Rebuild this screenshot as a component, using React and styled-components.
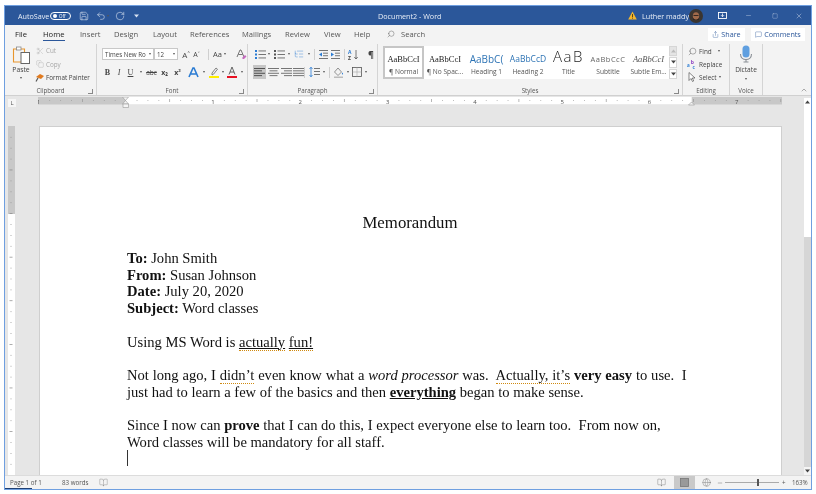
import React from 'react';
import styled, { createGlobalStyle } from 'styled-components';
import {
  Save, Undo2, RotateCw, Scissors, Copy, ListTree, Search, MessageSquare,
  Minus, Square, X, ChevronUp, BookOpen, Globe, Share,
} from 'lucide-react';

const GlobalStyle = createGlobalStyle`
  html, body { margin: 0; padding: 0; background: #fff; }
  body { width: 816px; height: 494px; overflow: hidden; font-family: "Open Sans", "Noto Sans", sans-serif; }
`;

const Wrap = styled.div`
  padding: 5px 4px 0 4px;
  filter: blur(0.3px);
`;

const Window = styled.div`
  width: 808px;
  height: 485px;
  box-sizing: border-box;
  border: 1px solid #6f9fe0;
  display: flex;
  flex-direction: column;
  background: #e6e6e6;
  overflow: hidden;
`;

const TitleBar = styled.div`
  height: 19px;
  flex: none;
  background: #2b579a;
  color: #fff;
  display: flex;
  align-items: center;
  font-size: 7.2px;
  padding-left: 13px;
`;

const AutoSave = styled.span`
  width: 32px;
  color: #e8eef7;
`;

const Toggle = styled.span`
  width: 21px;
  height: 8px;
  box-sizing: border-box;
  border: 1px solid #fff;
  border-radius: 5px;
  display: flex;
  align-items: center;
  gap: 2px;
  padding-left: 2px;
  font-size: 4.5px;
  margin-right: 8px;
  &::before { content: ''; width: 4px; height: 4px; border-radius: 50%; background: #fff; }
`;

const QuickIcon = styled.span`
  display: flex;
  align-items: center;
  width: ${p => p.$w}px;
  color: #e8eef7;
`;

const DocTitle = styled.span`
  position: absolute;
  left: 378px;
  color: #e8eef7;
`;

const TitleRight = styled.div`
  margin-left: auto;
  display: flex;
  align-items: center;
  padding-right: 8px;
`;

const UserName = styled.span`
  width: 47px;
  color: #e8eef7;
`;

const Tabs = styled.div`
  height: 18px;
  flex: none;
  background: #f3f3f3;
  display: flex;
  align-items: center;
  padding-left: 10px;
  font-size: 7.6px;
  color: #555;
  position: relative;
`;

const Tab = styled.span`
  width: ${p => p.$w}px;
  color: ${p => (p.$dark ? '#222' : '#555')};
  height: 18px;
  display: flex;
  align-items: center;
  position: relative;
  ${p => p.$active && `
    color: #222;
    &::after { content: ''; position: absolute; left: 0; bottom: 2px; width: 22px; height: 1.5px; background: #2b579a; }
  `}
`;

const TabActions = styled.div`
  margin-left: auto;
  display: flex;
  gap: 6px;
  padding-right: 6px;
`;

const TabButton = styled.span`
  background: #fff;
  color: #2b579a;
  height: 13px;
  width: ${p => p.$w}px;
  font-size: 7.2px;
  display: flex;
  align-items: center;
  justify-content: center;
  gap: 2px;
`;

const Ribbon = styled.div`
  height: 53px;
  flex: none;
  background: #f3f3f3;
  border-bottom: 1px solid #d0d0d0;
  box-sizing: border-box;
  display: flex;
  font-size: 6.6px;
  color: #444;
`;

const Group = styled.div`
  width: ${p => p.$w}px;
  flex: none;
  box-sizing: border-box;
  border-right: 1px solid #d4d4d4;
  margin-top: 1px;
  display: flex;
  flex-direction: column;
`;

const GroupBody = styled.div`
  flex: 1;
  display: flex;
  min-height: 0;
`;

const GroupLabel = styled.div`
  height: 9px;
  line-height: 9px;
  text-align: center;
  font-size: 6.2px;
  color: #555;
  position: relative;
`;

const Launcher = styled.span`
  position: absolute;
  right: 3px;
  top: 3px;
  width: 4px;
  height: 4px;
  border-right: 1px solid #888;
  border-bottom: 1px solid #888;
`;

const PasteCol = styled.div`
  width: 28px;
  margin-left: 2px;
  display: flex;
  flex-direction: column;
  align-items: center;
  font-size: 6.8px;
  padding-top: 2px;
  line-height: 10px;
`;

const PasteLabel = styled.span`
  margin-top: 1px;
`;

const Caret = styled.span`
  display: inline-block;
  width: 0;
  height: 0;
  border-left: 1.5px solid transparent;
  border-right: 1.5px solid transparent;
  border-top: 2px solid #555;
  margin: ${p => p.$m || '0 0 0 2px'};
  vertical-align: middle;
`;

const ClipCol = styled.div`
  display: flex;
  flex-direction: column;
  gap: 2.5px;
  padding-top: 1px;
`;

const ClipItem = styled.div`
  height: 11px;
  display: flex;
  align-items: center;
  gap: 1px;
  color: ${p => (p.$off ? '#a8a8a8' : '#444')};
  font-size: 6.3px;
`;

const ClipIcon = styled.span`
  width: 10px;
  display: flex;
  justify-content: center;
`;

const RowStack = styled.div`
  display: flex;
  flex-direction: column;
  gap: 4px;
  padding: 3px 0 0 5px;
`;

const Row = styled.div`
  height: 14px;
  display: flex;
  align-items: center;
`;

const Select = styled.span`
  width: ${p => p.$w}px;
  height: 12px;
  box-sizing: border-box;
  background: #fff;
  border: 1px solid #c8c8c8;
  font-size: 6.2px;
  padding: 0 2px;
  display: flex;
  align-items: center;
  justify-content: space-between;
  white-space: nowrap;
  overflow: hidden;
`;

const Slot = styled.span`
  width: ${p => p.$w}px;
  height: 14px;
  flex: none;
  display: flex;
  align-items: center;
  justify-content: center;
  font-size: ${p => p.$size || 7}px;
  color: ${p => p.$color || '#444'};
  font-weight: ${p => (p.$bold ? 700 : 400)};
  font-style: ${p => (p.$italic ? 'italic' : 'normal')};
  text-decoration: ${p => p.$deco || 'none'};
  font-family: ${p => (p.$serif ? '"Liberation Serif", serif' : 'inherit')};
  background: ${p => (p.$active ? '#c6c6c6' : 'transparent')};
`;

const Divider = styled.span`
  width: 1px;
  height: 11px;
  background: #cfcfcf;
  margin: 0 ${p => p.$m ?? 3}px;
  flex: none;
`;

const Gallery = styled.div`
  margin: 2px 0 0 5px;
  height: 33px;
  display: flex;
`;

const StyleList = styled.div`
  background: #fff;
  width: 286px;
  display: flex;
`;

const StyleItem = styled.div`
  width: ${p => p.$w}px;
  flex: none;
  box-sizing: border-box;
  border: ${p => (p.$tall ? 0 : 2)}px solid ${p => (p.$active ? '#c6c6c6' : 'transparent')};
  display: flex;
  flex-direction: column;
  align-items: center;
  padding-top: ${p => (p.$tall ? 0 : 3)}px;
`;

const StylePreview = styled.div`
  height: ${p => p.$h || 16}px;
  line-height: ${p => p.$h || 16}px;
  white-space: nowrap;
  font-family: ${p => (p.$serif ? '"Liberation Serif", serif' : '"Open Sans", sans-serif')};
  font-size: ${p => p.$size}px;
  font-weight: ${p => p.$weight || 400};
  color: ${p => p.$color || '#222'};
  font-style: ${p => (p.$italic ? 'italic' : 'normal')};
  letter-spacing: ${p => p.$ls || 0}px;
`;

const StyleName = styled.div`
  font-size: 6.6px;
  line-height: 9px;
  color: #555;
  white-space: nowrap;
`;

const GalleryScroll = styled.div`
  width: 8px;
  display: flex;
  flex-direction: column;
  gap: 1px;
`;

const ScrollCell = styled.span`
  flex: 1;
  background: ${p => (p.$off ? '#e4e4e4' : '#fff')};
  border: 1px solid #d6d6d6;
  display: flex;
  align-items: center;
  justify-content: center;
`;

const EditCol = styled.div`
  display: flex;
  flex-direction: column;
  gap: 1px;
  padding: 1px 0 0 4px;
  font-size: 6.4px;
`;

const EditItem = styled.div`
  height: 12px;
  display: flex;
  align-items: center;
  gap: 2px;
`;

const EditIcon = styled.span`
  width: 10px;
  display: flex;
  justify-content: center;
`;

const VoiceCol = styled.div`
  width: 100%;
  display: flex;
  flex-direction: column;
  align-items: center;
  font-size: 6.6px;
  line-height: 10px;
`;

const MicBody = styled.span`
  height: 18px;
  margin-top: 1px;
  margin-bottom: 2px;
  display: flex;
`;

const RibbonEnd = styled.div`
  flex: 1;
  display: flex;
  align-items: flex-end;
  justify-content: flex-end;
  padding: 0 3px 1px 0;
`;

const Workspace = styled.div`
  flex: 1;
  min-height: 0;
  display: flex;
`;

const Main = styled.div`
  flex: 1;
  min-width: 0;
  display: flex;
  flex-direction: column;
`;

const RulerRow = styled.div`
  height: 29px;
  flex: none;
  padding: 1px 0 0 3px;
  display: flex;
`;

const TabStop = styled.span`
  width: 8px;
  height: 8px;
  background: #f6f6f6;
  margin: 2px 22px 0 0;
  display: flex;
  align-items: flex-end;
  justify-content: center;
  font-size: 6px;
  line-height: 7px;
  color: #555;
`;

const DocRow = styled.div`
  flex: 1;
  min-height: 0;
  display: flex;
  overflow: hidden;
`;

const VRulerCol = styled.div`
  width: 34px;
  flex: none;
  padding-left: 3px;
  box-sizing: border-box;
`;

const Page = styled.div`
  width: 743px;
  flex: none;
  height: 600px;
  box-sizing: border-box;
  background: #fff;
  border-top: 1px solid #cfcfcf;
  border-left: 1px solid #cfcfcf;
  border-right: 1px solid #cfcfcf;
  padding: 86px 88px 0 87px;
  font-family: "Liberation Serif", "Times New Roman", serif;
  font-size: 14.58px;
  line-height: 16.7px;
  color: #111;
  white-space: pre-wrap;
`;

const MemoTitle = styled.div`
  text-align: center;
  font-size: 16.8px;
  line-height: 20px;
  margin-bottom: 17px;
`;

const Para = styled.div`
  margin-bottom: 16.7px;
`;

const WideLine = styled.span`
  word-spacing: 0.2px;
`;

const Squiggle = styled.span`
  border-bottom: 1px dotted #d08a10;
  text-decoration: ${p => (p.$under ? 'underline' : 'none')};
`;

const Under = styled.b`
  text-decoration: underline;
`;

const Cursor = styled.span`
  display: inline-block;
  width: 1px;
  height: 16px;
  background: #333;
`;

const Scrollbar = styled.div`
  width: 7px;
  flex: none;
  display: flex;
  flex-direction: column;
  margin-top: 2px;
  background: #d6d6d6;
`;

const ScrollThumb = styled.div`
  height: 139px;
  background: #fff;
  display: flex;
  justify-content: center;
  padding-top: 2px;
  box-sizing: border-box;
`;

const ScrollDown = styled.div`
  margin-top: auto;
  height: 8px;
  background: #f4f4f4;
  display: flex;
  align-items: center;
  justify-content: center;
`;

const StatusBar = styled.div`
  height: 14px;
  flex: none;
  background: #f3f3f3;
  border-top: 1px solid #dcdcdc;
  box-sizing: border-box;
  display: flex;
  align-items: center;
  font-size: 6.2px;
  color: #555;
  position: relative;
  padding-left: 5px;
  &::after { content: ''; position: absolute; left: 0; bottom: 0; width: 27px; height: 1px; background: #1f3f72; }
`;

const StatusText = styled.span`
  width: ${p => p.$w}px;
  padding-left: ${p => p.$pl || 0}px;
  box-sizing: border-box;
`;

const StatusRight = styled.div`
  margin-left: auto;
  display: flex;
  align-items: center;
  height: 100%;
  padding-right: 3px;
`;

const ViewButton = styled.span`
  width: ${p => p.$w}px;
  height: 100%;
  background: ${p => (p.$active ? '#c9c9c9' : 'transparent')};
  display: flex;
  align-items: center;
  justify-content: center;
  color: #666;
`;

const ZoomTrack = styled.span`
  width: 54px;
  height: 1px;
  background: #aaa;
  margin: 0 1px 0 2px;
  position: relative;
`;

const ZoomThumb = styled.span`
  position: absolute;
  left: 32px;
  top: -3px;
  width: 2px;
  height: 7px;
  background: #555;
`;

const Up = ({ c = '#444' }) => (
  <svg width="5" height="4" viewBox="0 0 5 4"><path d="M0 3.5 2.5 .5 5 3.5z" fill={c} /></svg>
);

const Down = ({ c = '#444' }) => (
  <svg width="5" height="4" viewBox="0 0 5 4"><path d="M0 .5 2.5 3.5 5 .5z" fill={c} /></svg>
);

const PasteIcon = () => (
  <svg width="19" height="18" viewBox="0 0 19 18">
    <path d="M5 3H1.500v13H9" fill="none" stroke="#e8962e" strokeWidth="1.100" />
    <path d="M9 3h3.500v3" fill="none" stroke="#e8962e" strokeWidth="1.100" />
    <rect x="4.500" y="1" width="4.500" height="3" fill="#fff" stroke="#888" strokeWidth=".8" />
    <rect x="9" y="6.500" width="8.500" height="11" fill="#fff" stroke="#666" strokeWidth="1" />
  </svg>
);

const PainterIcon = () => (
  <svg width="10" height="9" viewBox="0 0 10 9">
    <path d="M1 4 5 1l4 2-3 3z" fill="#e07a1f" />
    <path d="M3 5 1 8.500" stroke="#555" strokeWidth="1.200" />
  </svg>
);

const ClearFormat = () => (
  <svg width="11" height="11" viewBox="0 0 11 11">
    <path d="M1 8 4 1h1l3 7M2.400 5.500h4.200" fill="none" stroke="#666" strokeWidth=".9" />
    <path d="m6 9 3-3 1.500 1.500-2.500 2.500H7z" fill="#c56bc0" />
  </svg>
);

const TextEffect = () => (
  <svg width="11" height="11" viewBox="0 0 11 11">
    <path d="M1 10 5 1h1l4 9M3 7h5" fill="none" stroke="#2b7cd3" strokeWidth="1.600" />
  </svg>
);

const Highlight = () => (
  <svg width="10" height="12" viewBox="0 0 10 12">
    <path d="m3 7 4-5 1.500 1.200-4 5L3 9z" fill="none" stroke="#666" strokeWidth=".8" />
    <rect x="0" y="10" width="10" height="2" fill="#ffee00" />
  </svg>
);

const FontColor = () => (
  <svg width="10" height="12" viewBox="0 0 10 12">
    <path d="M2 8.500 5 1l3 7.500M3 6h4" fill="none" stroke="#555" strokeWidth=".9" />
    <rect x="0" y="10" width="10" height="2" fill="#e81123" />
  </svg>
);

const Lines = ({ align = 'left', active }) => {
  const x = { left: 0, center: 1.5, right: 3, justify: 0 }[align];
  const w = align === 'justify' ? 11 : 8;
  const rows = [[0, 11], [x, w], [0, 11], [x, w]];
  return (
    <svg width="11" height="9" viewBox="0 0 11 9">
      {rows.map((r, i) => <rect key={i} x={r[0]} y={i * 2.4} width={r[1]} height=".9" fill={active ? '#444' : '#666'} />)}
    </svg>
  );
};

const Bullets = ({ c = '#2b7cd3' }) => (
  <svg width="11" height="9" viewBox="0 0 11 9">
    {[0, 3.5, 7].map(y => (
      <g key={y}>
        <rect x="0" y={y} width="2" height="2" fill={c} />
        <rect x="3.500" y={y + 0.5} width="7.500" height=".9" fill="#666" />
      </g>
    ))}
  </svg>
);

const Indent = ({ flip }) => (
  <svg width="9" height="9" viewBox="0 0 9 9">
    <rect x="0" y="0" width="9" height=".9" fill="#666" />
    <rect x="0" y="8" width="9" height=".9" fill="#666" />
    <rect x="4" y="2.700" width="5" height=".9" fill="#666" />
    <rect x="4" y="5.300" width="5" height=".9" fill="#666" />
    <path d={flip ? 'M3 2.500v4L0 4.500z' : 'M0 2.500v4l3-2z'} fill="#2b7cd3" />
  </svg>
);

const SortIcon = () => (
  <svg width="11" height="11" viewBox="0 0 11 11">
    <text x="0" y="5" fontSize="5" fill="#2b7cd3" fontWeight="700">A</text>
    <text x="0" y="10.500" fontSize="5" fill="#444" fontWeight="700">Z</text>
    <path d="M8 1v9M6.300 8 8 10l1.700-2" fill="none" stroke="#555" strokeWidth=".8" />
  </svg>
);

const LineSpacing = () => (
  <svg width="11" height="10" viewBox="0 0 11 10">
    <path d="M2 0v10M.5 2 2 .3 3.500 2M.5 8 2 9.700 3.500 8" fill="none" stroke="#2b7cd3" strokeWidth=".8" />
    {[1, 4, 7].map(y => <rect key={y} x="5" y={y} width="6" height=".9" fill="#666" />)}
  </svg>
);

const Shading = () => (
  <svg width="11" height="11" viewBox="0 0 11 11">
    <path d="M5 1 1.500 5 5 8.500 8.500 5z" fill="none" stroke="#777" strokeWidth=".8" />
    <path d="M9.500 5.500c.8 1 .8 2 0 2s-.8-1 0-2z" fill="#2b7cd3" />
    <rect x="1" y="9.500" width="9" height="1.500" fill="#bbb" />
  </svg>
);

const Borders = () => (
  <svg width="10" height="10" viewBox="0 0 10 10">
    <rect x=".5" y=".5" width="9" height="9" fill="none" stroke="#555" strokeWidth=".8" />
    <path d="M5 .5v9M.5 5h9" stroke="#aaa" strokeWidth=".6" />
  </svg>
);

const ReplaceIcon = () => (
  <svg width="11" height="11" viewBox="0 0 11 11">
    <text x="4" y="5" fontSize="5.500" fill="#8a3fc0" fontWeight="700">b</text>
    <text x="0" y="8" fontSize="5" fill="#2b7cd3" fontWeight="700">a</text>
    <text x="6" y="10.500" fontSize="5" fill="#2b7cd3" fontWeight="700">c</text>
  </svg>
);

const SelectIcon = () => (
  <svg width="8" height="10" viewBox="0 0 8 10">
    <path d="M1 .5v8l2-2 1.500 3 1.200-.6-1.400-2.900H7z" fill="#fff" stroke="#555" strokeWidth=".7" />
  </svg>
);

const MicIcon = () => (
  <svg width="14" height="18" viewBox="0 0 14 18">
    <rect x="3.500" y="0.500" width="7" height="12" rx="3.500" fill="#5f9fe0" />
    <path d="M1.500 9c0 3.500 2.500 5.500 5.500 5.500s5.500-2 5.500-5.500" fill="none" stroke="#8a8f96" strokeWidth="1.100" />
    <path d="M7 14.500V17M4.500 17h5" stroke="#8a8f96" strokeWidth="1.100" />
  </svg>
);

const PrintIcon = () => (
  <svg width="9" height="9" viewBox="0 0 9 9">
    <rect x=".5" y=".5" width="8" height="8" fill="#999" stroke="#777" strokeWidth=".8" />
  </svg>
);

const WarningIcon = () => (
  <svg width="9" height="9" viewBox="0 0 9 9">
    <path d="M4.500 .5 8.800 8.500H.2z" fill="#f5b72e" />
    <rect x="4.100" y="3" width=".9" height="3" fill="#4a3a10" />
    <rect x="4.100" y="6.600" width=".9" height="1" fill="#4a3a10" />
  </svg>
);

const Avatar = () => (
  <svg width="14" height="14" viewBox="0 0 14 14">
    <circle cx="7" cy="7" r="7" fill="#3b3530" />
    <ellipse cx="7" cy="7" rx="3.200" ry="3.800" fill="#a0694a" />
    <path d="M3.800 8c1 3.500 5.400 3.500 6.400 0l-.5 3H4.300z" fill="#2b211c" />
    <rect x="4.500" y="6" width="5" height=".9" fill="#2b211c" />
  </svg>
);

const RibbonDisplay = () => (
  <svg width="9" height="7" viewBox="0 0 9 7">
    <rect x=".5" y=".5" width="8" height="6" fill="none" stroke="#fff" strokeWidth=".9" />
    <path d="M4.500 1.500v3M3 3.200l1.500 1.500L6 3.200" fill="none" stroke="#fff" strokeWidth=".8" />
  </svg>
);

const HRuler = () => {
  const unit = 87.3;
  const zero = 87.7;
  const marks = [];
  for (let i = -8; i <= 64; i++) {
    const x = zero + i * unit / 8;
    if (x < 0 || x > 744) continue;
    if (i % 8 === 0) {
      const n = i / 8;
      marks.push(<text key={i} x={x} y="6.500" fontSize="6" fill="#555" textAnchor="middle" fontFamily="Open Sans">{Math.abs(n) || ''}</text>);
    } else if (i % 4 === 0) {
      marks.push(<rect key={i} x={x} y="2" width=".7" height="3" fill="#999" />);
    } else {
      marks.push(<rect key={i} x={x} y="3" width=".8" height=".8" fill="#999" />);
    }
  }
  return (
    <svg width="744" height="19" viewBox="0 0 744 19">
      <rect x="0" y="0" width="744" height="7.500" fill="#c8c8c8" />
      <rect x="87.700" y="0" width="566" height="7.500" fill="#fff" />
      {marks}
      <path d="M84.500 0h6l-3 3.500 3 3.500v0h-6l3-3.500z" fill="#f4f4f4" stroke="#999" strokeWidth=".6" />
      <path d="M85 7h5.500v3.500H85z" fill="#f4f4f4" stroke="#999" strokeWidth=".6" />
      <path d="M650.500 8l3-3 3 3z" fill="#f4f4f4" stroke="#999" strokeWidth=".6" />
    </svg>
  );
};

const VRuler = () => {
  const marks = [];
  for (let i = 1; i < 32; i++) {
    const y = i * 10.9;
    marks.push(i % 4 === 0
      ? <rect key={i} x="1.500" y={y} width="3" height=".7" fill="#888" />
      : <rect key={i} x="2.500" y={y} width="1" height=".8" fill="#999" />);
  }
  return (
    <svg width="7" height="350" viewBox="0 0 7 350">
      <rect x="0" y="0" width="7" height="88" fill="#c8c8c8" />
      <rect x="0" y="88" width="7" height="262" fill="#fff" />
      {marks}
    </svg>
  );
};

const App = () => (
  <Wrap>
    <GlobalStyle />
    <Window>
      <TitleBar>
        <AutoSave>AutoSave</AutoSave>
        <Toggle>Off</Toggle>
        <QuickIcon $w={17}><Save size={10} strokeWidth={1.3} /></QuickIcon>
        <QuickIcon $w={11}><Undo2 size={10} strokeWidth={1.3} /></QuickIcon>
        <QuickIcon $w={8}><Caret $m="0" /></QuickIcon>
        <QuickIcon $w={19}><RotateCw size={10} strokeWidth={1.3} /></QuickIcon>
        <QuickIcon $w={6}><Down c="#d8e2f1" /></QuickIcon>
        <DocTitle>Document2  -  Word</DocTitle>
        <TitleRight>
          <QuickIcon $w={14}><WarningIcon /></QuickIcon>
          <UserName>Luther maddy</UserName>
          <QuickIcon $w={29}><Avatar /></QuickIcon>
          <QuickIcon $w={27}><RibbonDisplay /></QuickIcon>
          <QuickIcon $w={27}><Minus size={7} strokeWidth={1.2} /></QuickIcon>
          <QuickIcon $w={23}><Square size={6} strokeWidth={1.2} /></QuickIcon>
          <QuickIcon $w={8}><X size={8} strokeWidth={1.2} /></QuickIcon>
        </TitleRight>
      </TitleBar>

      <Tabs>
        <Tab $w={28} $dark>File</Tab>
        <Tab $w={37} $active>Home</Tab>
        <Tab $w={34}>Insert</Tab>
        <Tab $w={39}>Design</Tab>
        <Tab $w={37}>Layout</Tab>
        <Tab $w={52}>References</Tab>
        <Tab $w={43}>Mailings</Tab>
        <Tab $w={39}>Review</Tab>
        <Tab $w={30}>View</Tab>
        <Tab $w={33}>Help</Tab>
        <Tab $w={14}><Search size={8} strokeWidth={1.3} style={{ transform: 'scaleX(-1)' }} /></Tab>
        <Tab $w={30}>Search</Tab>
        <TabActions>
          <TabButton $w={37}><Share size={7} strokeWidth={1.3} />Share</TabButton>
          <TabButton $w={54}><MessageSquare size={7} strokeWidth={1.3} />Comments</TabButton>
        </TabActions>
      </Tabs>

      <Ribbon>
        <Group $w={92}>
          <GroupBody>
            <PasteCol>
              <PasteIcon />
              <PasteLabel>Paste</PasteLabel>
              <Caret $m="2px 0 0" />
            </PasteCol>
            <ClipCol>
              <ClipItem $off><ClipIcon><Scissors size={8} strokeWidth={1.1} /></ClipIcon>Cut</ClipItem>
              <ClipItem $off><ClipIcon><Copy size={8} strokeWidth={1.1} /></ClipIcon>Copy</ClipItem>
              <ClipItem><ClipIcon><PainterIcon /></ClipIcon>Format Painter</ClipItem>
            </ClipCol>
          </GroupBody>
          <GroupLabel>Clipboard<Launcher /></GroupLabel>
        </Group>

        <Group $w={151}>
          <GroupBody>
            <RowStack>
              <Row>
                <Select $w={52}>Times New Ro<Caret /></Select>
                <Select $w={24}>12<Caret /></Select>
                <Slot $w={3} />
                <Slot $w={10} $size={8}>A˄</Slot>
                <Slot $w={11} $size={7}>A˅</Slot>
                <Slot $w={4} />
                <Divider $m={2} />
                <Slot $w={17} $size={7.5}>Aa<Caret /></Slot>
                <Slot $w={8} />
                <ClearFormat />
              </Row>
              <Row>
                <Slot $w={11} $bold $serif $size={8}>B</Slot>
                <Slot $w={12} $italic $serif $size={8}>I</Slot>
                <Slot $w={11} $deco="underline" $serif $size={8}>U</Slot>
                <Slot $w={9}><Caret $m="0" /></Slot>
                <Slot $w={13} $deco="line-through" $size={6.5}>abc</Slot>
                <Slot $w={13} $bold $size={7}>x₂</Slot>
                <Slot $w={13} $bold $size={7}>x²</Slot>
                <Slot $w={3} />
                <Slot $w={13}><TextEffect /></Slot>
                <Slot $w={7}><Caret $m="0" /></Slot>
                <Slot $w={13}><Highlight /></Slot>
                <Slot $w={6}><Caret $m="0" /></Slot>
                <Slot $w={12}><FontColor /></Slot>
                <Slot $w={7}><Caret $m="0" /></Slot>
              </Row>
            </RowStack>
          </GroupBody>
          <GroupLabel>Font<Launcher /></GroupLabel>
        </Group>

        <Group $w={130}>
          <GroupBody>
            <RowStack>
              <Row>
                <Slot $w={14}><Bullets /></Slot>
                <Slot $w={4}><Caret $m="0" /></Slot>
                <Slot $w={16}><Bullets c="#555" /></Slot>
                <Slot $w={4}><Caret $m="0" /></Slot>
                <Slot $w={16}><ListTree size={10} strokeWidth={1} color="#2b7cd3" /></Slot>
                <Slot $w={4}><Caret $m="0" /></Slot>
                <Divider $m={3} />
                <Slot $w={11}><Indent flip /></Slot>
                <Slot $w={13}><Indent /></Slot>
                <Divider $m={2} />
                <Slot $w={12}><SortIcon /></Slot>
                <Slot $w={24} $bold $size={9}>¶</Slot>
              </Row>
              <Row>
                <Slot $w={13} $active><Lines align="left" active /></Slot>
                <Slot $w={14}><Lines align="center" /></Slot>
                <Slot $w={12}><Lines align="right" /></Slot>
                <Slot $w={12}><Lines align="justify" /></Slot>
                <Divider $m={0} />
                <Slot $w={3} />
                <Slot $w={13}><LineSpacing /></Slot>
                <Slot $w={6}><Caret $m="0" /></Slot>
                <Divider $m={2} />
                <Slot $w={13}><Shading /></Slot>
                <Slot $w={5}><Caret $m="0" /></Slot>
                <Slot $w={13}><Borders /></Slot>
                <Slot $w={5}><Caret $m="0" /></Slot>
              </Row>
            </RowStack>
          </GroupBody>
          <GroupLabel>Paragraph<Launcher /></GroupLabel>
        </Group>

        <Group $w={305}>
          <GroupBody>
            <Gallery>
              <StyleList>
                <StyleItem $w={41} $active>
                  <StylePreview $serif $size={8.5}>AaBbCcI</StylePreview>
                  <StyleName>¶ Normal</StyleName>
                </StyleItem>
                <StyleItem $w={42}>
                  <StylePreview $serif $size={8.5}>AaBbCcI</StylePreview>
                  <StyleName>¶ No Spac...</StyleName>
                </StyleItem>
                <StyleItem $w={41}>
                  <StylePreview $size={10} $color="#2e74b5">AaBbC(</StylePreview>
                  <StyleName>Heading 1</StyleName>
                </StyleItem>
                <StyleItem $w={42}>
                  <StylePreview $size={8.5} $color="#2e74b5">AaBbCcD</StylePreview>
                  <StyleName>Heading 2</StyleName>
                </StyleItem>
                <StyleItem $w={39} $tall>
                  <StylePreview $h={21} $size={15} $weight={300} $ls={1.6} $color="#222">AaB</StylePreview>
                  <StyleName>Title</StyleName>
                </StyleItem>
                <StyleItem $w={40}>
                  <StylePreview $size={7.5} $color="#666" $ls={0.5}>AaBbCcC</StylePreview>
                  <StyleName>Subtitle</StyleName>
                </StyleItem>
                <StyleItem $w={41}>
                  <StylePreview $serif $italic $size={8.5} $color="#555">AaBbCcI</StylePreview>
                  <StyleName>Subtle Em...</StyleName>
                </StyleItem>
              </StyleList>
              <GalleryScroll>
                <ScrollCell $off><Up c="#bbb" /></ScrollCell>
                <ScrollCell><Down /></ScrollCell>
                <ScrollCell><Down /></ScrollCell>
              </GalleryScroll>
            </Gallery>
          </GroupBody>
          <GroupLabel>Styles<Launcher /></GroupLabel>
        </Group>

        <Group $w={47}>
          <GroupBody>
            <EditCol>
              <EditItem><EditIcon><Search size={9} strokeWidth={1.1} style={{ transform: 'scaleX(-1)' }} /></EditIcon>Find<Caret $m="0 0 0 4px" /></EditItem>
              <EditItem><EditIcon><ReplaceIcon /></EditIcon>Replace</EditItem>
              <EditItem><EditIcon><SelectIcon /></EditIcon>Select<Caret $m="0" /></EditItem>
            </EditCol>
          </GroupBody>
          <GroupLabel>Editing</GroupLabel>
        </Group>

        <Group $w={33}>
          <GroupBody>
            <VoiceCol>
              <MicBody><MicIcon /></MicBody>
              <span>Dictate</span>
              <Caret $m="3px 0 0" />
            </VoiceCol>
          </GroupBody>
          <GroupLabel>Voice</GroupLabel>
        </Group>

        <RibbonEnd><ChevronUp size={8} strokeWidth={1.4} color="#555" /></RibbonEnd>
      </Ribbon>

      <Workspace>
        <Main>
          <RulerRow>
            <TabStop>L</TabStop>
            <HRuler />
          </RulerRow>
          <DocRow>
            <VRulerCol><VRuler /></VRulerCol>
            <Page>
              <MemoTitle>Memorandum</MemoTitle>
              <Para>
                <div><b>To:</b> John Smith</div>
                <div><b>From:</b> Susan Johnson</div>
                <div><b>Date:</b> July 20, 2020</div>
                <div><b>Subject:</b> Word classes</div>
              </Para>
              <Para>Using MS Word is <Squiggle $under>actually</Squiggle> <Squiggle $under>fun!</Squiggle></Para>
              <Para>
                <WideLine>Not long ago, I <Squiggle>didn’t</Squiggle> even know what a <i>word processor</i> was.  <Squiggle>Actually, it’s</Squiggle> <b>very easy</b> to use.  I</WideLine><br />
                just had to learn a few of the basics and then <Under>everything</Under> began to make sense.
              </Para>
              <Para>
                Since I now can <b>prove</b> that I can do this, I expect everyone else to learn too.  From now on,<br />
                Word classes will be mandatory for all staff.<br />
                <Cursor />
              </Para>
            </Page>
          </DocRow>
        </Main>
        <Scrollbar>
          <ScrollThumb><Up /></ScrollThumb>
          <ScrollDown><Down /></ScrollDown>
        </Scrollbar>
      </Workspace>

      <StatusBar>
        <StatusText $w={52}>Page 1 of 1</StatusText>
        <StatusText $w={37}>83 words</StatusText>
        <BookOpen size={9} strokeWidth={1} color="#777" />
        <StatusRight>
          <ViewButton $w={14}><BookOpen size={9} strokeWidth={1} /></ViewButton>
          <ViewButton $w={6} />
          <ViewButton $w={21} $active><PrintIcon /></ViewButton>
          <ViewButton $w={22}><Globe size={9} strokeWidth={1} /></ViewButton>
          <Minus size={6} strokeWidth={1.6} />
          <ZoomTrack><ZoomThumb /></ZoomTrack>
          <StatusText $w={12} $pl={2}>+</StatusText>
          <StatusText $w={16}>163%</StatusText>
        </StatusRight>
      </StatusBar>
    </Window>
  </Wrap>
);

export default App;
